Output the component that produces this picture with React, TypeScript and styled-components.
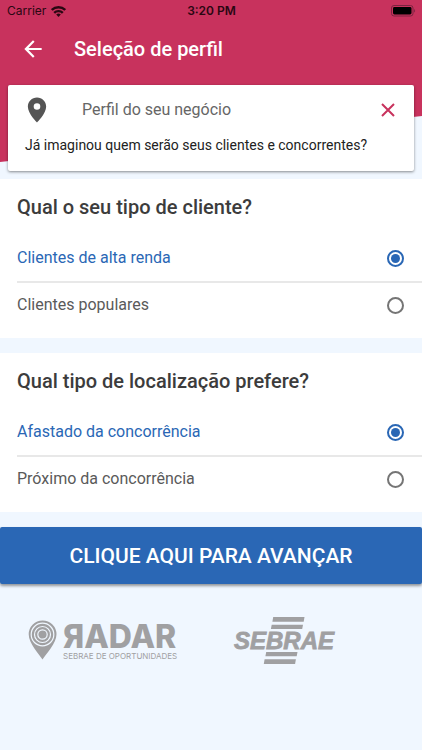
import React, { useState } from "react";
import styled, { createGlobalStyle } from "styled-components";

const color = {
  pink: "#c8325d",
  blue: "#2a67b5",
  page: "#f0f7ff",
  heading: "#3c3c3c",
  text: "#5a5a5a",
  logo: "#a0a0a2",
};

const GlobalStyle = createGlobalStyle`
  *, *::before, *::after { box-sizing: border-box; }
  body {
    margin: 0;
    background: ${color.page};
    font-family: Roboto, "Liberation Sans", sans-serif;
  }
  button, input { font-family: inherit; margin: 0; }
`;

const Hero = styled.header`
  position: relative;
  padding-bottom: 8px;

  &::before {
    content: "";
    position: absolute;
    inset: 0;
    z-index: -1;
    background: ${color.pink};
    clip-path: polygon(0 0, 100% 0, 100% 116px, 0 162px);
  }
`;

const StatusBar = styled.div`
  display: grid;
  grid-template-columns: 1fr auto 1fr;
  align-items: center;
  height: 22px;
  padding: 0 6px 0 7px;
  font: 400 12px/16px Inter, sans-serif;
  color: #2a0712;
`;

const Carrier = styled.span`
  display: flex;
  align-items: center;
  gap: 5px;
`;

const Clock = styled.time`
  font-weight: 600;
`;

const BatteryIcon = styled.svg`
  justify-self: end;
`;

const AppBar = styled.div`
  display: flex;
  align-items: center;
  gap: 28px;
  height: 54px;
  padding: 0 20px;
`;

const IconButton = styled.button`
  display: flex;
  padding: 0;
  border: 0;
  background: none;
  color: inherit;
  cursor: pointer;
`;

const BackButton = styled(IconButton)`
  color: #fff;
`;

const PageTitle = styled.h1`
  margin: 0;
  font-size: 20px;
  font-weight: 500;
  line-height: 24px;
  color: #fff;
`;

const Card = styled.section`
  margin: 9px 8px 0;
  padding: 10px 17px 16px;
  border-radius: 2px;
  background: #fff;
  box-shadow: 0 1px 3px rgba(0, 0, 0, 0.45);
`;

const CardHeader = styled.div`
  display: flex;
  align-items: center;
  height: 30px;
  color: #555;
`;

const CardTitle = styled.h2`
  flex: 1;
  margin: 0 0 0 33px;
  font-size: 16px;
  font-weight: 400;
  line-height: 20px;
  color: #666;
`;

const CloseButton = styled(IconButton)`
  color: ${color.pink};
`;

const CardText = styled.p`
  margin: 10px 0 0;
  font-size: 14px;
  line-height: 20px;
  color: #222;
`;

const Question = styled.fieldset`
  min-width: 0;
  margin: 0 0 15px;
  padding: 14px 0 11px 17px;
  border: 0;
  background: #fff;
`;

const QuestionTitle = styled.legend`
  float: left;
  width: 100%;
  margin-bottom: 14px;
  padding: 0;
  font-size: 20px;
  font-weight: 500;
  line-height: 28px;
  color: ${color.heading};
`;

const Option = styled.label<{ $selected: boolean }>`
  clear: both;
  display: flex;
  align-items: center;
  justify-content: space-between;
  height: 46px;
  padding-right: 18px;
  font-size: 16px;
  line-height: 20px;
  color: ${(p) => (p.$selected ? color.blue : color.text)};
  cursor: pointer;

  & + & {
    border-top: 2px solid #e8e8e8;
  }
`;

const Radio = styled.input`
  appearance: none;
  display: grid;
  place-items: center;
  width: 17px;
  height: 17px;
  border: 2px solid #757575;
  border-radius: 50%;
  background: #fff;
  cursor: pointer;

  &:checked { border-color: ${color.blue}; }
  &:checked::before {
    content: "";
    width: 9px;
    height: 9px;
    border-radius: 50%;
    background: ${color.blue};
  }
`;

const AdvanceButton = styled.button`
  display: block;
  width: 100%;
  height: 57px;
  padding: 0;
  border: 0;
  border-radius: 2px;
  background: ${color.blue};
  box-shadow: 0 2px 3px rgba(0, 0, 0, 0.4);
  font-size: 21px;
  font-weight: 500;
  line-height: 24px;
  color: #fff;
  text-transform: uppercase;
  cursor: pointer;
`;

const Logos = styled.footer`
  display: flex;
  align-items: center;
  gap: 52px;
  padding: 33px 28px;
`;

const Logo = styled.svg`
  flex: none;
  overflow: visible;
  fill: ${color.logo};
`;

function WifiIcon() {
  return (
    <svg width="15" height="11" viewBox="0 0 15 11" fill="none" stroke="currentColor" strokeWidth="2.4" aria-hidden="true">
      <path d="M.8 4a9.600 9.600 0 0 1 13.400 0" />
      <path d="M3.200 6.900a6.100 6.100 0 0 1 8.600 0" />
      <path d="M7.500 11 5.200 8.600a3.200 3.200 0 0 1 4.600 0z" fill="currentColor" stroke="none" />
    </svg>
  );
}

function Battery() {
  return (
    <BatteryIcon width="25" height="12" viewBox="0 0 25 12" aria-hidden="true">
      <rect x=".5" y=".5" width="21.5" height="10.5" rx="2.5" fill="none" stroke="#7c2340" />
      <rect x="2" y="2" width="18.5" height="7.5" rx="1.4" fill="#000" />
      <path d="M23.2 4v3.6c1.2-.5 1.2-3.1 0-3.6z" fill="#7c2340" />
    </BatteryIcon>
  );
}

function RadarLogo() {
  return (
    <Logo width="154" height="42" viewBox="0 0 154 42" role="img" aria-label="Radar Sebrae de Oportunidades">
      <path d="M14.500 39.500C11 34 .7 23.500.7 14.300a13.900 13.900 0 0 1 27.800 0C28.500 23.500 18 34 14.500 39.500z" />
      <g fill="none" stroke={color.page} strokeWidth="1.200">
        <circle cx="14.500" cy="14.500" r="11.300" />
        <circle cx="14.500" cy="14.500" r="8" />
        <circle cx="14.500" cy="14.500" r="4.700" />
      </g>
      <text x="35" y="28" fontFamily="Inter, sans-serif" fontWeight="800" fontSize="32">ЯADAR</text>
      <text x="35" y="39" fontFamily="Inter, sans-serif" fontSize="8">SEBRAE DE OPORTUNIDADES</text>
    </Logo>
  );
}

function SebraeLogo() {
  return (
    <Logo width="104" height="48" viewBox="0 0 104 48" role="img" aria-label="Sebrae">
      <path d="M39.200 0h31.300l-.8 4.700H38.400zM37.700 7.800H69l-.8 4.200H36.900zM32.200 35h31.300l-.8 4.200H31.400zM30.600 42.200h31.300l-.8 4.700H29.800z" />
      <text x="0" y="32" fontFamily='"Liberation Sans", sans-serif' fontWeight="700" fontStyle="italic" fontSize="24" stroke={color.logo} strokeWidth=".8">SEBRAE</text>
    </Logo>
  );
}

type QuestionProps = { name: string; title: string; options: string[] };

function RadioQuestion({ name, title, options }: QuestionProps) {
  const [selected, setSelected] = useState(options[0]);
  return (
    <Question>
      <QuestionTitle>{title}</QuestionTitle>
      {options.map((option) => (
        <Option key={option} $selected={option === selected}>
          {option}
          <Radio
            type="radio"
            name={name}
            value={option}
            checked={option === selected}
            onChange={() => setSelected(option)}
          />
        </Option>
      ))}
    </Question>
  );
}

export default function App() {
  const [showCard, setShowCard] = useState(true);
  return (
    <>
      <GlobalStyle />
      <Hero>
        <StatusBar>
          <Carrier>Carrier <WifiIcon /></Carrier>
          <Clock>3:20 PM</Clock>
          <Battery />
        </StatusBar>
        <AppBar>
          <BackButton type="button" aria-label="Voltar">
            <svg width="26" height="26" viewBox="0 0 24 24" fill="currentColor" aria-hidden="true">
              <path d="M20 11H7.830l5.590-5.590L12 4l-8 8 8 8 1.410-1.410L7.830 13H20v-2z" />
            </svg>
          </BackButton>
          <PageTitle>Seleção de perfil</PageTitle>
        </AppBar>
        {showCard && (
          <Card>
            <CardHeader>
              <svg width="24" height="30" viewBox="4 2 16 20" fill="currentColor" aria-hidden="true">
                <path d="M12 3.700c-3.400 0-6.100 2.700-6.100 6.100C5.900 14.300 12 20.300 12 20.300s6.100-6 6.100-10.500c0-3.400-2.700-6.100-6.100-6.100zm0 8.200a2.200 2.200 0 1 1 0-4.400 2.200 2.200 0 0 1 0 4.400z" />
              </svg>
              <CardTitle>Perfil do seu negócio</CardTitle>
              <CloseButton type="button" aria-label="Fechar" onClick={() => setShowCard(false)}>
                <svg width="18" height="18" viewBox="0 0 18 18" fill="none" stroke="currentColor" strokeWidth="2" aria-hidden="true">
                  <path d="M3 3l12 12M15 3L3 15" />
                </svg>
              </CloseButton>
            </CardHeader>
            <CardText>Já imaginou quem serão seus clientes e concorrentes?</CardText>
          </Card>
        )}
      </Hero>
      <main>
        <RadioQuestion
          name="cliente"
          title="Qual o seu tipo de cliente?"
          options={["Clientes de alta renda", "Clientes populares"]}
        />
        <RadioQuestion
          name="localizacao"
          title="Qual tipo de localização prefere?"
          options={["Afastado da concorrência", "Próximo da concorrência"]}
        />
        <AdvanceButton type="button">Clique aqui para avançar</AdvanceButton>
      </main>
      <Logos>
        <RadarLogo />
        <SebraeLogo />
      </Logos>
    </>
  );
}
